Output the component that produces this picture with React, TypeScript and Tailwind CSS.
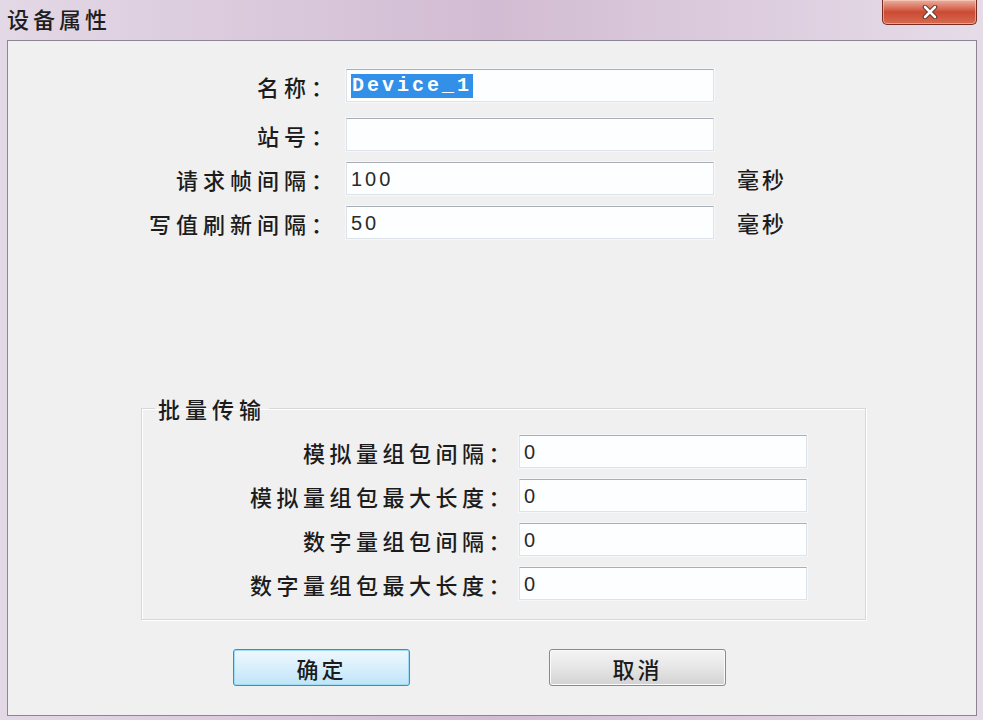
import React from "react";

const font = { fontFamily: '"Noto Sans CJK SC", "Noto Sans", sans-serif' };

const Field = ({ value, selected }: { value?: string; selected?: boolean }) => (
  <div className="h-[33px] w-full bg-[#fdfeff] border border-[#dde3ea] border-t-[#a9adb5] flex items-center pl-[4px] shadow-[0_0_0_1px_#f6f7f9]">
    {selected ? (
      <span
        className="bg-[#3390e8] text-white text-[20px] font-bold tracking-[3px] leading-[24px] px-[1px]"
        style={{ fontFamily: '"Liberation Mono", monospace' }}
      >
        Device_1
      </span>
    ) : (
      <span className="text-[20px] tracking-[3px] text-[#2a2a2a]" style={{ fontFamily: '"Liberation Sans", sans-serif' }}>
        {value}
      </span>
    )}
  </div>
);

const topRows = [
  { label: "名称：", value: "", selected: true, unit: "", mt: "mt-[28px]" },
  { label: "站号：", value: "", unit: "", mt: "mt-[16px]" },
  { label: "请求帧间隔：", value: "100", unit: "毫秒", mt: "mt-[11px]" },
  { label: "写值刷新间隔：", value: "50", unit: "毫秒", mt: "mt-[11px]" },
];

const groupRows = ["模拟量组包间隔：", "模拟量组包最大长度：", "数字量组包间隔：", "数字量组包最大长度："];

export default function App() {
  return (
    <div
      className="w-[983px] h-[720px] flex flex-col bg-gradient-to-r from-[#e3d8e6] via-[#d2bcd3] to-[#e6dce8] overflow-hidden"
      style={font}
    >
      {/* title bar */}
      <div className="h-[40px] shrink-0 relative">
        <div className="pl-[7px] pt-[5px] text-[22px] font-medium tracking-[4px] text-[#1e1e1e] leading-[26px]">设备属性</div>
        <div className="absolute right-[6px] top-0 w-[95px] h-[25px] rounded-b-[5px] border border-t-0 border-[#7a2b22] bg-gradient-to-b from-[#eab0a0] via-[#cc4a34] to-[#d66a50] flex items-center justify-center shadow-[inset_0_0_0_1px_rgba(255,220,210,0.5)]">
          <svg width="16" height="14" viewBox="0 0 16 14">
            <path d="M3 2 L13 12 M13 2 L3 12" stroke="#5a2a22" strokeWidth="4.5" strokeLinecap="round" />
            <path d="M3 2 L13 12 M13 2 L3 12" stroke="#ffffff" strokeWidth="2.6" strokeLinecap="round" />
          </svg>
        </div>
      </div>

      {/* client area */}
      <div className="flex-1 ml-[7px] mr-[6px] mb-[4px] border border-[#8d8592] bg-[#f0f0f0] flex flex-col text-[#1c1c1c]">
        {topRows.map((r) => (
          <div key={r.label} className={`flex items-center ${r.mt}`}>
            <div className="w-[330px] text-right text-[22px] font-medium tracking-[5px] leading-[26px]">{r.label}</div>
            <div className="ml-[8px] w-[368px]">
              <Field value={r.value} selected={r.selected} />
            </div>
            <div className="ml-[23px] text-[22px] font-medium tracking-[3px]">{r.unit}</div>
          </div>
        ))}

        <fieldset className="ml-[133px] mt-[156px] w-[725px] h-[225px] border border-[#d6d8da] shadow-[inset_1px_1px_0_#ffffff,1px_1px_0_#ffffff] px-0 pt-[14px]">
          <legend className="ml-[13px] px-[3px] text-[22px] font-medium tracking-[5px] leading-[26px]">批量传输</legend>
          <div className="flex flex-col gap-[11px]">
            {groupRows.map((g) => (
              <div key={g} className="flex items-center">
                <div className="w-[373px] text-right text-[22px] font-medium tracking-[4.5px] leading-[26px]">{g}</div>
                <div className="ml-[4px] w-[288px]">
                  <Field value="0" />
                </div>
              </div>
            ))}
          </div>
        </fieldset>

        <div className="flex mt-[29px] ml-[225px] gap-[139px]">
          <button className="w-[177px] h-[37px] rounded-[3px] border border-[#3d8ec0] bg-gradient-to-b from-[#eef8fe] via-[#d9effc] to-[#bfe4f8] shadow-[inset_0_0_0_1px_#9fdcf6] text-[22px] font-medium tracking-[3px] leading-[26px] text-[#1c1c1c]">
            确定
          </button>
          <button className="w-[177px] h-[37px] rounded-[3px] border border-[#8a8a8a] bg-gradient-to-b from-[#f4f4f4] via-[#e6e6e6] to-[#d2d2d2] shadow-[inset_0_0_0_1px_#fbfbfb] text-[22px] font-medium tracking-[3px] leading-[26px] text-[#1c1c1c]">
            取消
          </button>
        </div>
      </div>
    </div>
  );
}
